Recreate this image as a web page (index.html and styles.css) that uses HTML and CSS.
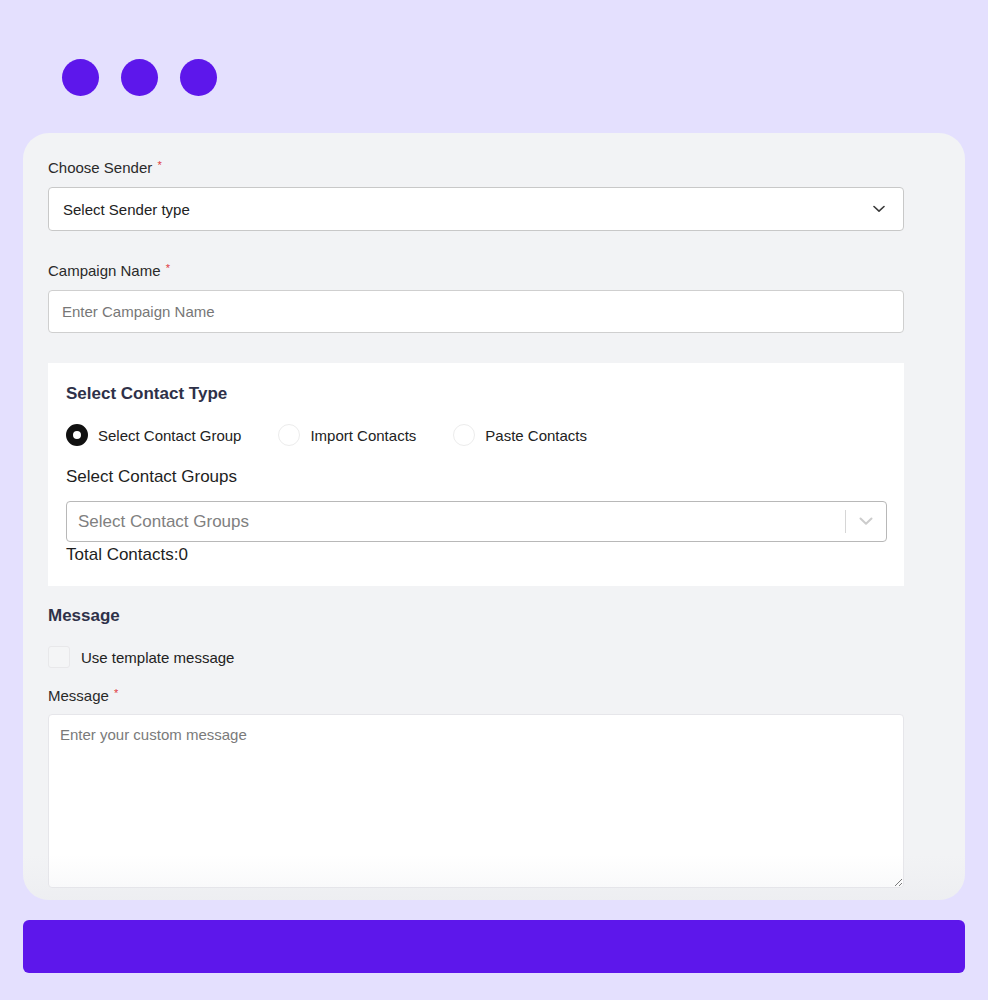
FILE: index.html
```html
<!DOCTYPE html>
<html lang="en">
<head>
<meta charset="utf-8">
<title>Campaign</title>
<link rel="stylesheet" href="styles.css">
</head>
<body>
<div class="page">
  <div class="dots">
    <span class="dot"></span>
    <span class="dot"></span>
    <span class="dot"></span>
  </div>

  <div class="card">
    <div class="field">
      <div class="label">Choose Sender <span class="req">*</span></div>
      <div class="select">
        <span>Select Sender type</span>
        <svg class="chev" width="12" height="8" viewBox="0 0 12 8"><path d="M1 1.5 L6 6.2 L11 1.5" fill="none" stroke="#3a3a3a" stroke-width="1.6" stroke-linecap="round" stroke-linejoin="round"/></svg>
      </div>
    </div>

    <div class="field gap30">
      <div class="label">Campaign Name <span class="req">*</span></div>
      <input class="input" type="text" placeholder="Enter Campaign Name">
    </div>

    <div class="section">
      <div class="title">Select Contact Type</div>
      <div class="radios">
        <label class="radio-item"><span class="radio on"></span><span>Select Contact Group</span></label>
        <label class="radio-item"><span class="radio"></span><span>Import Contacts</span></label>
        <label class="radio-item"><span class="radio"></span><span>Paste Contacts</span></label>
      </div>
      <div class="sub">Select Contact Groups</div>
      <div class="multi">
        <span class="ph">Select Contact Groups</span>
        <span class="sep"></span>
        <svg class="mchev" width="14" height="9" viewBox="0 0 14 9"><path d="M1.5 1.5 L7 6.8 L12.5 1.5" fill="none" stroke="#cccccc" stroke-width="2" stroke-linecap="round" stroke-linejoin="round"/></svg>
      </div>
      <div class="total">Total Contacts:0</div>
    </div>

    <div class="title msg-title">Message</div>
    <label class="check-row"><span class="checkbox"></span><span>Use template message</span></label>
    <div class="label msg-label">Message <span class="req">*</span></div>
    <textarea class="textarea" placeholder="Enter your custom message"></textarea>
  </div>

  <div class="button"></div>
</div>
</body>
</html>
```

FILE: styles.css
```css
* { box-sizing: border-box; }

html, body {
  margin: 0;
  padding: 0;
  background: #e4e0fe;
  font-family: "Liberation Sans", Arial, sans-serif;
  color: #222;
}

.page {
  width: 988px;
  padding: 59px 23px 0 23px;
}

.dots {
  display: flex;
  gap: 22px;
  padding-left: 39px;
}

.dot {
  width: 37px;
  height: 37px;
  border-radius: 50%;
  background: #5d17eb;
}

.card {
  position: relative;
  margin-top: 37px;
  background: #f2f3f5;
  border-radius: 26px;
  padding: 25px 61px 12px 25px;
  display: flex;
  flex-direction: column;
  overflow: hidden;
}

.card::after {
  content: "";
  position: absolute;
  left: 0;
  right: 0;
  bottom: 0;
  height: 45px;
  background: linear-gradient(to bottom, rgba(230, 231, 236, 0), rgba(225, 226, 232, 0.28));
  pointer-events: none;
}

.field { display: flex; flex-direction: column; }
.gap30 { margin-top: 30px; }

.label {
  font-size: 15px;
  line-height: 20px;
  height: 20px;
  color: #2a2a2a;
  margin-bottom: 9px;
}

.req {
  color: #e0393e;
  font-size: 11px;
  line-height: 0;
  vertical-align: 4px;
  margin-left: 1px;
}

.select {
  height: 44px;
  background: #fff;
  border: 1px solid #c8c8c8;
  border-radius: 4px;
  padding: 0 18px 0 14px;
  display: flex;
  align-items: center;
  justify-content: space-between;
  font-size: 15px;
  color: #222;
}

.chev { display: block; }

.input {
  height: 43px;
  background: #fff;
  border: 1px solid #cfcfcf;
  border-radius: 4px;
  padding: 0 13px;
  font-family: "Liberation Sans", Arial, sans-serif;
  font-size: 15px;
  color: #222;
  outline: none;
}

.input::placeholder { color: #777; }

.section {
  margin-top: 30px;
  background: #fff;
  padding: 20px 17px 20px 18px;
  display: flex;
  flex-direction: column;
}

.title {
  font-size: 17px;
  line-height: 22px;
  font-weight: bold;
  color: #2e3149;
}

.radios {
  display: flex;
  gap: 37px;
  margin-top: 19px;
  height: 22px;
  align-items: center;
}

.radio-item {
  display: flex;
  align-items: center;
  gap: 10px;
  font-size: 15px;
  color: #222;
}

.radio {
  width: 22px;
  height: 22px;
  border-radius: 50%;
  background: #fff;
  border: 1px solid #ececec;
}

.radio.on {
  border: 7px solid #111;
  background: #fff;
}

.sub {
  margin-top: 20px;
  font-size: 17px;
  line-height: 22px;
  color: #1e1e1e;
}

.multi {
  margin-top: 13px;
  height: 41px;
  border: 1px solid #b8b8b8;
  border-radius: 4px;
  display: flex;
  align-items: center;
  padding-left: 11px;
}

.ph {
  flex: 1;
  font-size: 17px;
  color: #808080;
}

.sep {
  width: 1px;
  height: 23px;
  background: #d6d6d6;
}

.mchev {
  display: block;
  margin: 0 13px 0 13px;
}

.total {
  margin-top: 2px;
  font-size: 17px;
  line-height: 22px;
  color: #1e1e1e;
}

.msg-title { margin-top: 19px; }

.check-row {
  margin-top: 19px;
  display: flex;
  align-items: center;
  gap: 11px;
  font-size: 15px;
  color: #222;
  height: 22px;
}

.checkbox {
  width: 22px;
  height: 22px;
  border-radius: 3px;
  background: #f4f5f6;
  border: 1px solid #e8e8ea;
}

.msg-label {
  margin-top: 18px;
  margin-bottom: 8px;
}

.textarea {
  display: block;
  width: 100%;
  height: 174px;
  background: #fff;
  border: 1px solid #e6e6ea;
  border-radius: 4px;
  padding: 11px 11px;
  font-family: "Liberation Sans", Arial, sans-serif;
  font-size: 15px;
  color: #222;
  outline: none;
  resize: vertical;
}

.textarea::placeholder { color: #7a7a7a; }

.button {
  margin-top: 20px;
  height: 53px;
  background: #5d17eb;
  border-radius: 6px;
}
```
